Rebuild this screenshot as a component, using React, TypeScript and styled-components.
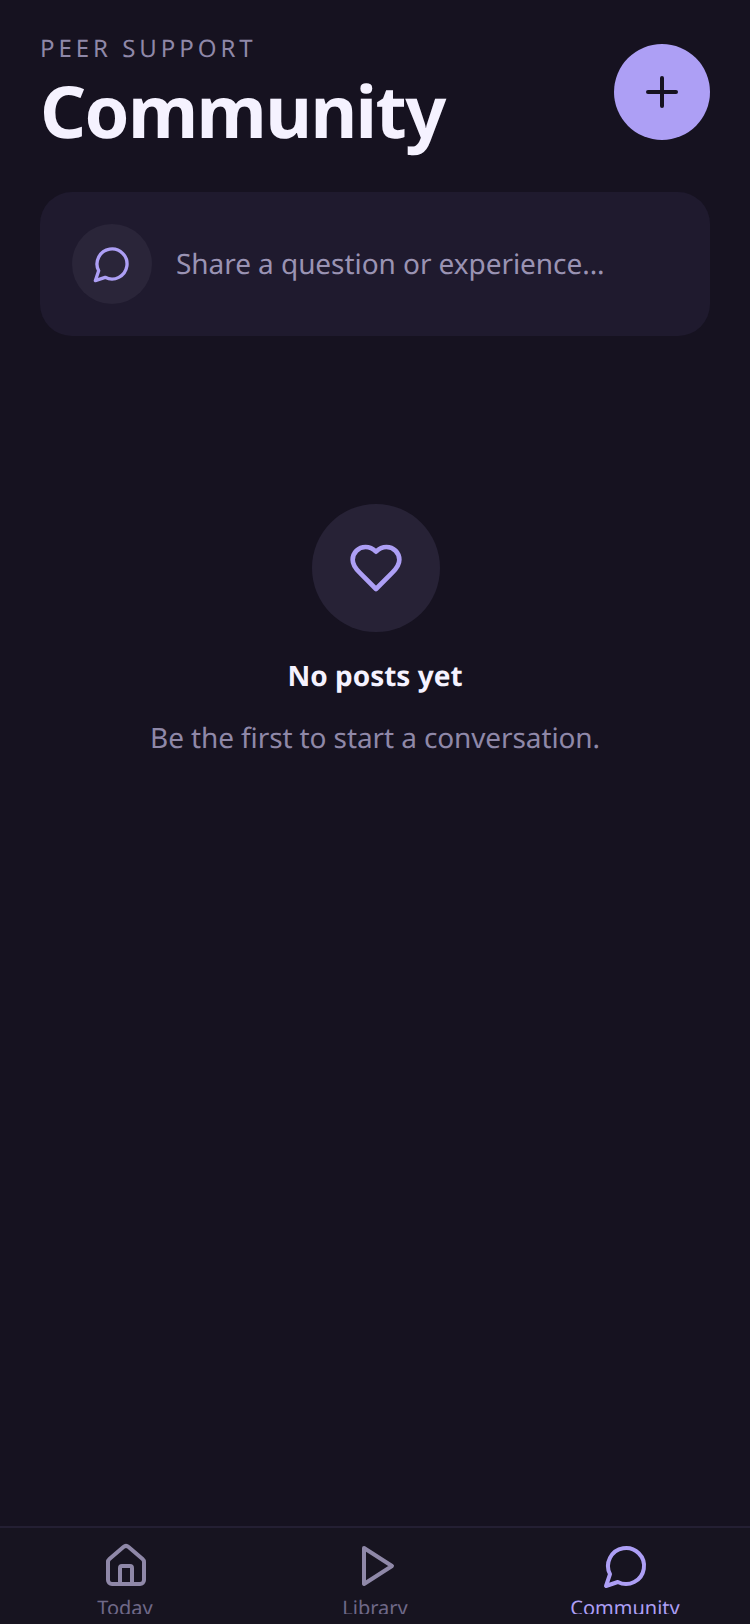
import React from 'react';
import styled, { createGlobalStyle } from 'styled-components';

const GlobalStyle = createGlobalStyle`
  html, body {
    margin: 0;
    padding: 0;
    background: #161220;
    font-family: "Noto Sans", sans-serif;
    text-rendering: geometricPrecision;
  }
  * {
    box-sizing: border-box;
  }
`;

const Screen = styled.div`
  width: 750px;
  height: 1624px;
  display: flex;
  flex-direction: column;
  overflow: hidden;
  background: #161220;
`;

const Main = styled.main`
  flex: 1;
  min-height: 0;
  padding: 29px 40px 0;
`;

const Header = styled.header`
  display: flex;
  justify-content: space-between;
  align-items: flex-start;
`;

const Eyebrow = styled.div`
  font-size: 24px;
  line-height: 40px;
  letter-spacing: 3.96px;
  color: #8f88a8;
`;

const Title = styled.h1`
  margin: -2px 0 0;
  font-size: 72px;
  line-height: 88px;
  font-weight: 700;
  letter-spacing: -1.6px;
  color: #f5f2ff;
`;

const AddButton = styled.button`
  width: 96px;
  height: 96px;
  margin-top: 15px;
  padding: 0;
  border: 0;
  border-radius: 50%;
  display: flex;
  align-items: center;
  justify-content: center;
  background: #ad9ff5;
  color: #161220;
`;

const Composer = styled.div`
  height: 144px;
  margin-top: 37px;
  padding: 0 32px;
  border-radius: 32px;
  display: flex;
  align-items: center;
  gap: 24px;
  background: #1f1a2e;
`;

const ComposerIcon = styled.div`
  width: 80px;
  height: 80px;
  border-radius: 50%;
  display: flex;
  align-items: center;
  justify-content: center;
  background: #2a2539;
  color: #ad9ff5;
`;

const ComposerText = styled.span`
  font-size: 28px;
  letter-spacing: -0.06px;
  color: #9a93b3;
`;

const Empty = styled.section`
  margin-top: 168px;
  display: flex;
  flex-direction: column;
  align-items: center;
`;

const EmptyIcon = styled.div`
  width: 128px;
  height: 128px;
  margin-left: 2px;
  border-radius: 50%;
  display: flex;
  align-items: center;
  justify-content: center;
  background: #272236;
  color: #ad9ff5;
`;

const EmptyTitle = styled.h2`
  margin: 24px 0 0;
  font-size: 28px;
  line-height: 40px;
  font-weight: 700;
  color: #f5f2ff;
`;

const EmptyText = styled.p`
  margin: 20px 0 0;
  font-size: 28px;
  line-height: 44px;
  letter-spacing: -0.11px;
  color: #8f88a8;
`;

const Nav = styled.nav`
  height: 98px;
  flex: none;
  display: grid;
  grid-template-columns: repeat(3, 1fr);
  border-top: 2px solid #241f33;
  overflow: hidden;
  background: #171420;
`;

const NavItem = styled.div<{ $active?: boolean }>`
  height: 86px;
  padding-top: 14px;
  display: flex;
  flex-direction: column;
  align-items: center;
  overflow: hidden;
  color: ${({ $active }) => ($active ? '#ad9ff5' : '#8f88a8')};

  svg {
    flex: none;
    margin-left: 2px;
  }
`;

const NavLabel = styled.span<{ $active?: boolean }>`
  margin-top: 4px;
  font-size: 20px;
  line-height: 28px;
  white-space: nowrap;
  color: ${({ $active }) => ($active ? '#ad9ff5' : '#6f6988')};
`;

const Icon: React.FC<{ size: number; children: React.ReactNode }> = ({ size, children }) => (
  <svg
    width={size}
    height={size}
    viewBox="0 0 24 24"
    fill="none"
    stroke="currentColor"
    strokeWidth={2}
    strokeLinecap="round"
    strokeLinejoin="round"
  >
    {children}
  </svg>
);

const bubble = <path d="M7.9 20A9 9 0 1 0 4 16.1L2 22Z" />;

const App: React.FC = () => (
  <Screen>
    <GlobalStyle />
    <Main>
      <Header>
        <div>
          <Eyebrow>PEER SUPPORT</Eyebrow>
          <Title>Community</Title>
        </div>
        <AddButton aria-label="New post">
          <Icon size={48}>
            <path d="M5 12h14" />
            <path d="M12 5v14" />
          </Icon>
        </AddButton>
      </Header>
      <Composer>
        <ComposerIcon>
          <Icon size={40}>{bubble}</Icon>
        </ComposerIcon>
        <ComposerText>Share a question or experience...</ComposerText>
      </Composer>
      <Empty>
        <EmptyIcon>
          <Icon size={56}>
            <path d="M19 14c1.49-1.46 3-3.21 3-5.5A5.5 5.5 0 0 0 16.5 3c-1.76 0-3 .5-4.5 2-1.5-1.5-2.74-2-4.5-2A5.5 5.5 0 0 0 2 8.5c0 2.3 1.5 4.05 3 5.5l7 7Z" />
          </Icon>
        </EmptyIcon>
        <EmptyTitle>No posts yet</EmptyTitle>
        <EmptyText>Be the first to start a conversation.</EmptyText>
      </Empty>
    </Main>
    <Nav>
      <NavItem>
        <Icon size={48}>
          <path d="M15 21v-8a1 1 0 0 0-1-1h-4a1 1 0 0 0-1 1v8" />
          <path d="M3 10a2 2 0 0 1 .709-1.528l7-5.999a2 2 0 0 1 2.582 0l7 5.999A2 2 0 0 1 21 10v9a2 2 0 0 1-2 2H5a2 2 0 0 1-2-2z" />
        </Icon>
        <NavLabel>Today</NavLabel>
      </NavItem>
      <NavItem>
        <Icon size={48}>
          <polygon points="6 3 20 12 6 21 6 3" />
        </Icon>
        <NavLabel>Library</NavLabel>
      </NavItem>
      <NavItem $active>
        <Icon size={48}>{bubble}</Icon>
        <NavLabel $active>Community</NavLabel>
      </NavItem>
    </Nav>
  </Screen>
);

export default App;
